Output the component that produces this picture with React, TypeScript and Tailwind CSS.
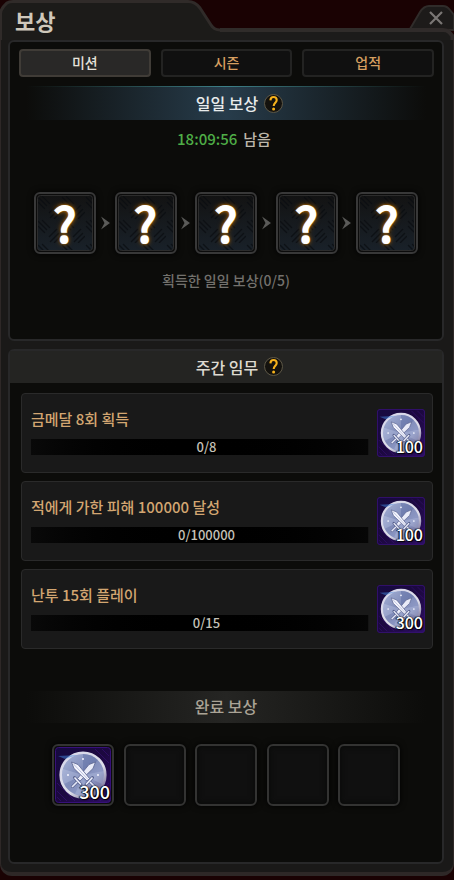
import React, { useState } from 'react';

interface Mission {
  id: string;
  label: string;
  current: number;
  goal: number;
  reward: number;
}

const TABS = ['미션', '시즌', '업적'];

const MISSIONS: Mission[] = [
  { id: 'gold', label: '금메달 8회 획득', current: 0, goal: 8, reward: 100 },
  { id: 'damage', label: '적에게 가한 피해 100000 달성', current: 0, goal: 100000, reward: 100 },
  { id: 'brawl', label: '난투 15회 플레이', current: 0, goal: 15, reward: 300 },
];

const DAILY_SLOTS = [0, 1, 2, 3, 4];
const FINAL_SLOTS: (number | null)[] = [300, null, null, null, null];

const HelpButton: React.FC<{ label: string }> = ({ label }) => (
  <button
    type="button"
    aria-label={label}
    className="w-[19px] h-[19px] rounded-full border border-[#5d5746] bg-[#14120e] flex items-center justify-center"
  >
    <svg width="17" height="17" viewBox="0 0 17 17" fill="none">
      <path d="M5.400 5.400C5.500 3.200 6.800 2 8.600 2c1.900 0 3.100 1.200 3.100 2.900 0 2.700-3 2.900-3 6" stroke="#f6b21c" strokeWidth="2.100" />
      <circle cx="8.600" cy="14" r="1.500" fill="#f6b21c" />
    </svg>
  </button>
);

/* Silver coin with crossed swords on a purple plate */
const CoinArt: React.FC<{ id: string }> = ({ id }) => (
  <svg viewBox="0 0 56 56" className="w-full h-full block">
    <defs>
      <linearGradient id={`plate-${id}`} x1="0" y1="0" x2="1" y2="1">
        <stop offset="0" stopColor="#160a40" />
        <stop offset="0.5" stopColor="#1c0840" />
        <stop offset="1" stopColor="#2e0f66" />
      </linearGradient>
      <linearGradient id={`coin-${id}`} x1="0" y1="0" x2="1" y2="1">
        <stop offset="0" stopColor="#aab6da" />
        <stop offset="0.45" stopColor="#7f8bb8" />
        <stop offset="0.65" stopColor="#8d98c4" />
        <stop offset="1" stopColor="#5f5680" />
      </linearGradient>
      <linearGradient id={`rim-${id}`} x1="0" y1="0" x2="0.8" y2="1">
        <stop offset="0" stopColor="#d5d6ea" />
        <stop offset="0.65" stopColor="#dedee9" />
        <stop offset="1" stopColor="#6b6390" />
      </linearGradient>
    </defs>
    <rect x="0.5" y="0.5" width="55" height="55" rx="3" fill={`url(#plate-${id})`} stroke="#37107a" />
    <path d="M2 44l10 10M2 36l18 18M2 50l4 4M40 2l14 14M47 2l7 7M54 36L38 54M54 43L45 54" stroke="#43158a" strokeOpacity="0.45" />
    <circle cx="28" cy="28" r="22.300" fill={`url(#coin-${id})`} stroke={`url(#rim-${id})`} strokeWidth="2.600" />
    <path d="M28 28L28 7A21 21 0 0 1 43 13Z" fill="#5f70a6" fillOpacity="0.5" />
    <path d="M28 28L8 22A21 21 0 0 0 9 37Z" fill="#dce4fa" fillOpacity="0.25" />
    <path d="M28 28L49 24A21 21 0 0 1 47 37Z" fill="#dce4fa" fillOpacity="0.2" />
    <path d="M28 28L20 47A21 21 0 0 0 34 48Z" fill="#dce4fa" fillOpacity="0.2" />
    <path d="M3 9L22 8L10 12Z" fill="#3f86dc" fillOpacity="0.5" />
    <g fill="#f4f5ff">
      <circle cx="28" cy="12" r="1" />
      <circle cx="13" cy="28" r="1" />
      <circle cx="43" cy="28" r="1" />
    </g>
    <g fill="none" stroke="#59628f" strokeLinecap="round">
      <path d="M19.500 30.500L26 37.500M37.500 30.500L31 37.500" strokeWidth="3" />
      <path d="M22 35L17.500 39.500M35 35L39.500 39.500" strokeWidth="3" />
    </g>
    <path d="M40.500 15L34 17.500L22.500 31.500L25 34L38 21.500Z" fill="#e9ebf8" stroke="#59628f" strokeWidth="0.800" />
    <path d="M16.500 15L23 17.500L34.500 31.500L32 34L19 21.500Z" fill="#f3f4fd" stroke="#59628f" strokeWidth="0.800" />
    <path d="M18.500 17L33 32.500" stroke="#a2abd0" strokeWidth="0.700" />
    <path d="M19.500 30.500L26 37.500M37.500 30.500L31 37.500" stroke="#eef0fc" strokeWidth="1.600" />
    <path d="M22 35L17 40M35 35L40 40" stroke="#e3e6f6" strokeWidth="1.700" />
  </svg>
);

const Chevron = () => (
  <svg width="9" height="14" viewBox="0 0 9 14" className="shrink-0">
    <path d="M0 0.500L9 7L0 13.500L3.500 7Z" fill="#5b5b59" />
  </svg>
);

const MysteryTile = () => (
  <div className="w-[62px] h-[62px] shrink-0 relative rounded-md border-2 border-[#383838] bg-[#0b0b0b] p-px flex shadow-[0_0_6px_#000]">
    <svg viewBox="0 0 56 56" preserveAspectRatio="none" className="w-full h-full">
      <defs>
        <linearGradient id="steel" x1="0" y1="0" x2="0" y2="1">
          <stop offset="0" stopColor="#131313" />
          <stop offset="1" stopColor="#192129" />
        </linearGradient>
        <pattern id="tread" width="24" height="24" patternUnits="userSpaceOnUse">
          <path d="M1 2l9 9M5 1l8 8M1 7l7 7M13 23l9-9M12 18l8-8M17 24l7-7" stroke="#080c10" strokeOpacity="0.7" strokeWidth="1.500" />
        </pattern>
      </defs>
      <rect x="0.5" y="0.5" width="55" height="55" rx="3" fill="url(#steel)" />
      <rect x="0.5" y="0.5" width="55" height="55" rx="3" fill="url(#tread)" stroke="#2c2c2c" />
    </svg>
    <span className="absolute inset-0 pb-1 flex items-center justify-center text-5xl leading-none font-normal text-white [-webkit-text-stroke:2px_#fff] [text-shadow:0_0_2px_#ffa81e,0_0_2px_#ffa81e,0_0_4px_#d98108,0_0_6px_#a35c00]">
      ?
    </span>
  </div>
);

const MissionRow: React.FC<{ mission: Mission }> = ({ mission }) => (
  <li className="h-20 rounded border border-[#2a2a2a] bg-[#191919] pl-[9px] pr-[7px] flex items-center gap-2">
    <div className="flex-1 min-w-0 pb-[2px] flex flex-col gap-2.5">
      <span className="text-[15px] leading-5 font-medium text-[#d3a671]">{mission.label}</span>
      <div
        role="progressbar"
        aria-label={mission.label}
        aria-valuenow={mission.current}
        aria-valuemax={mission.goal}
        className="h-4 relative border-r border-[#141414] bg-linear-to-r from-[#090909] via-black to-[#060606]"
      >
        <div className="h-full bg-[#a8742e]" style={{ width: `${(mission.current / mission.goal) * 100}%` }} />
        <span className="absolute inset-0 pl-3.5 flex items-center justify-center text-[13px] leading-4 font-medium text-[#c6c2b8]">
          {mission.current}/{mission.goal}
        </span>
      </div>
    </div>
    <div className="w-12 h-12 shrink-0 relative">
      <CoinArt id={mission.id} />
      <span className="absolute right-[2px] bottom-px text-base leading-5 font-medium text-white [text-shadow:0_0_2px_#000,1px_1px_1px_#000,-1px_0_1px_#000]">
        {mission.reward}
      </span>
    </div>
  </li>
);

const FrameTop: React.FC<{ title: string }> = ({ title }) => (
  <header className="h-10 flex">
    <div className="w-[220px] shrink-0 relative">
      <svg width="220" height="40" viewBox="0 0 220 40" className="block">
        <path d="M0 40V14Q0 10 4 6L7 3Q9 1 13 1H188Q196 1 201 8L212 25Q215 29 220 29V40Z" fill="#1c1b19" />
        <path d="M0.500 40V14Q0.500 10 4 6L7 3Q9 1.500 13 1.500H188Q195 1.500 200 8L211 25Q214 30 220 30" fill="none" stroke="#302b29" strokeWidth="3" />
      </svg>
      <h1 className="absolute left-[15px] top-1.5 text-[22px] leading-7 font-bold text-[#cfc8bb]">{title}</h1>
    </div>
    <div className="flex-1 mt-7 border-t-4 border-[#302c2a] bg-[#1c1b1a]" />
    <div className="w-[54px] shrink-0 relative">
      <svg width="54" height="40" viewBox="0 0 54 40" className="block">
        <path d="M10 29L20 12Q24 6 29 6H43Q47 6 50 10L54 15V30Z" fill="#1d1b1a" stroke="#302c2a" strokeWidth="2" />
        <path d="M0 28H43Q48 28 51 32L54 37V40H0Z" fill="#1c1b1a" />
        <path d="M0 30H43Q47 30 49 32L52.500 36V40" fill="none" stroke="#302b2a" strokeWidth="4" />
      </svg>
      <button type="button" aria-label="닫기" className="absolute left-7 top-2.5 w-4 h-4">
        <svg width="16" height="16" viewBox="0 0 16 16">
          <path d="M2 2L14 14M14 2L2 14" stroke="#7a7775" strokeWidth="2.200" />
        </svg>
      </button>
    </div>
  </header>
);

export default function App() {
  const [tab, setTab] = useState(0);

  return (
    <div className="min-h-screen flex flex-col bg-[#1a0203] pb-1 font-['Noto_Sans_CJK_KR','Noto_Sans',sans-serif]">
      <FrameTop title="보상" />
      <main className="flex-1 flex flex-col gap-2 pl-[7px] pr-[9px] pb-2 bg-[#1a1918] border-x border-b-4 border-[#2e2827] rounded-b-xl">
        {/* Daily rewards */}
        <section className="rounded-md border-2 border-[#282829] bg-[#0c0c0a] pt-[7px] pb-[49px]">
          <div role="tablist" className="px-2 pl-[9px] flex gap-2.5">
            {TABS.map((name, i) => (
              <button
                key={name}
                type="button"
                role="tab"
                aria-selected={tab === i}
                onClick={() => setTab(i)}
                className={
                  tab === i
                    ? 'flex-1 h-7 pb-[2px] rounded-sm border-2 border-[#403c37] bg-[#292827] text-sm leading-5 font-medium text-[#e6e2da]'
                    : 'flex-1 h-7 pb-[2px] rounded-sm border-2 border-[#232322] bg-[#101010] text-sm leading-5 font-medium text-[#d79f60]'
                }
              >
                {name}
              </button>
            ))}
          </div>

          <div className="mt-[9px] mx-4">
            <div className="h-px bg-linear-to-r from-transparent via-[#3d8088] to-transparent" />
            <div className="h-[33px] pb-px flex items-center justify-center gap-1.5 pl-[27px] bg-linear-to-r from-transparent via-[#273c4b] to-transparent">
              <h2 className="text-base leading-6 font-medium text-[#e8ebec]">일일 보상</h2>
              <HelpButton label="일일 보상 도움말" />
            </div>
          </div>

          <p className="mt-[7px] pr-1 flex justify-center gap-1.5 text-[15px] leading-6 font-medium text-[#bdb7ab]">
            <time className="text-[#4fae47]">18:09:56</time>
            <span>남음</span>
          </p>

          <div className="mt-[41px] px-6 flex items-center justify-between">
            {DAILY_SLOTS.map((slot) => (
              <React.Fragment key={slot}>
                {slot > 0 && <Chevron />}
                <MysteryTile />
              </React.Fragment>
            ))}
          </div>

          <p className="mt-4 text-center text-sm leading-5 font-medium text-[#73716d]">획득한 일일 보상(0/5)</p>
        </section>

        {/* Weekly missions */}
        <section className="flex-1 rounded-md border-2 border-[#282829] bg-[#0c0c0a] pb-14">
          <div className="h-8 pb-px flex items-center justify-center gap-1.5 pl-[27px] bg-[#242422]">
            <h2 className="text-base leading-6 font-medium text-[#dedad1]">주간 임무</h2>
            <HelpButton label="주간 임무 도움말" />
          </div>

          <ul className="mt-2.5 pl-[11px] pr-[9px] flex flex-col gap-2">
            {MISSIONS.map((m) => (
              <MissionRow key={m.id} mission={m} />
            ))}
          </ul>

          <div className="mt-[42px] mx-4 h-8 pb-[2px] flex items-center justify-center bg-linear-to-r from-transparent via-[#252523] to-transparent">
            <h2 className="text-base leading-6 font-medium text-[#aaa396]">완료 보상</h2>
          </div>

          <div className="mt-[21px] mx-[42px] flex justify-between">
            {FINAL_SLOTS.map((amount, i) => (
              <div
                key={i}
                className="w-[62px] h-[62px] relative rounded-md border-2 border-[#333332] bg-[#101010] p-px shadow-[0_0_6px_#000,inset_0_0_6px_#080908]"
              >
                {amount !== null && (
                  <>
                    <CoinArt id="final" />
                    <span className="absolute right-[2px] bottom-px text-lg leading-6 font-medium text-white [text-shadow:0_0_2px_#000,1px_1px_1px_#000,-1px_0_1px_#000]">
                      {amount}
                    </span>
                  </>
                )}
              </div>
            ))}
          </div>
        </section>
      </main>
    </div>
  );
}
